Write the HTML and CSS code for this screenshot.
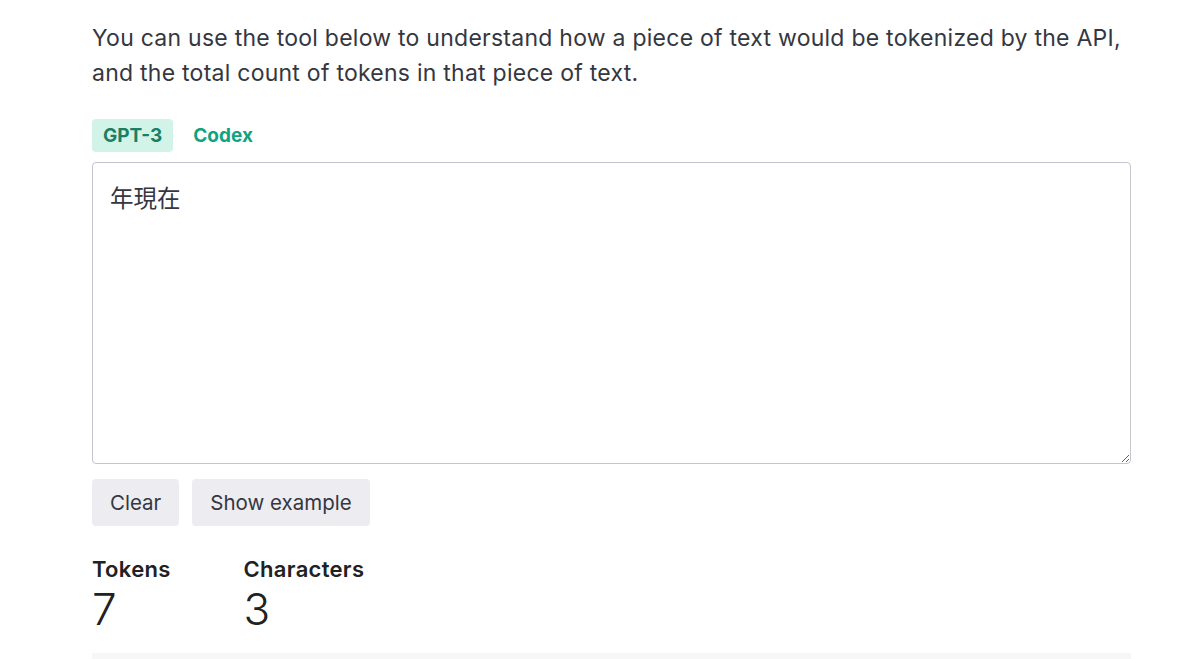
FILE: index.html
```html
<!DOCTYPE html>
<html>
<head>
<meta charset="utf-8">
<link rel="stylesheet" href="styles.css">
</head>
<body>
<main class="page">
  <p class="intro">You can use the tool below to understand how a piece of text would be tokenized by the API, and the total count of tokens in that piece of text.</p>
  <div class="tabs">
    <span class="tab active">GPT-3</span>
    <span class="tab">Codex</span>
  </div>
  <textarea class="input">年現在</textarea>
  <div class="buttons">
    <button class="btn">Clear</button>
    <button class="btn">Show example</button>
  </div>
  <div class="stats">
    <div class="stat">
      <div class="stat-label">Tokens</div>
      <div class="stat-value">7</div>
    </div>
    <div class="stat">
      <div class="stat-label">Characters</div>
      <div class="stat-value">3</div>
    </div>
  </div>
  <div class="output"></div>
</main>
</body>
</html>
```
FILE: styles.css
```css
html, body {
  margin: 0;
  padding: 0;
  background: #fff;
  overflow: hidden;
}
body {
  font-family: Inter, "Noto Sans", sans-serif;
  color: #353740;
}
.page {
  width: 1039px;
  margin-left: 92px;
  padding-top: 21px;
}
.intro {
  margin: 0;
  font-size: 23px;
  line-height: 35px;
  letter-spacing: 0.25px;
}
.tabs {
  display: flex;
  gap: 9px;
  margin-top: 28px;
}
.tab {
  font-weight: 700;
  font-size: 19px;
  color: #10a37f;
  padding: 0 11px;
  height: 33px;
  line-height: 33px;
  border-radius: 4px;
}
.tab.active {
  background: #d2f4e8;
  color: #1a7f64;
}
.input {
  display: block;
  box-sizing: border-box;
  width: 1039px;
  height: 302px;
  margin-top: 10px;
  border: 1px solid #c5c5d2;
  border-radius: 4px;
  padding: 19px 17px;
  font-family: "Noto Sans CJK JP", "Noto Sans CJK SC", sans-serif;
  font-size: 23.5px;
  line-height: 30px;
  color: #353740;
  resize: vertical;
  outline: none;
}
.buttons {
  display: flex;
  gap: 13px;
  margin-top: 15px;
}
.btn {
  font-family: Inter, "Noto Sans", sans-serif;
  font-size: 20.5px;
  color: #353740;
  background: #ececf1;
  border: none;
  border-radius: 4px;
  height: 47px;
  padding: 0 18px;
}
.stats {
  display: flex;
  gap: 73px;
  margin-top: 28px;
}
.stat-label {
  font-weight: 600;
  font-size: 22px;
  letter-spacing: 0.3px;
  color: #202123;
  line-height: 30px;
}
.stat-value {
  font-size: 44px;
  font-weight: 300;
  color: #202123;
  line-height: 50px;
}
.output {
  margin-top: 19px;
  height: 6px;
  background: #f7f7f8;
}
```
